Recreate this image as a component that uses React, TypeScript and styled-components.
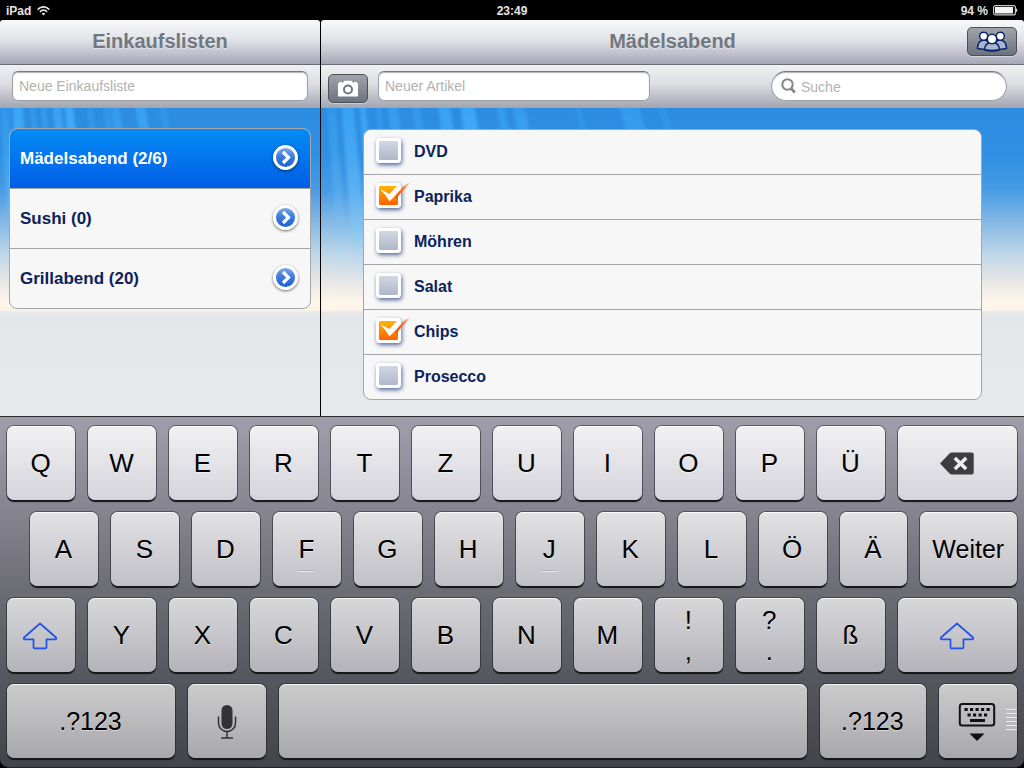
import React, { useState } from 'react';
import styled, { createGlobalStyle, css } from 'styled-components';

const GlobalStyle = createGlobalStyle`
  *, *::before, *::after { box-sizing: border-box; }
  body {
    margin: 0;
    background: #000;
    font-family: "Liberation Sans", Arial, Helvetica, sans-serif;
  }
  button, input { font: inherit; margin: 0; }
`;

const Screen = styled.div`
  display: flex;
  flex-direction: column;
  min-height: 100vh;
`;

/* ---------- status bar ---------- */

const StatusBar = styled.header`
  display: grid;
  grid-template-columns: 1fr auto 1fr;
  align-items: center;
  height: 20px;
  padding: 1px 6px 0;
  background: #000;
  color: #e4e4e4;
  font-size: 12px;
  font-weight: bold;
`;

const StatusGroup = styled.div<{ $end?: boolean }>`
  display: flex;
  align-items: center;
  gap: ${(p) => (p.$end ? 5 : 6)}px;
  justify-content: ${(p) => (p.$end ? 'flex-end' : 'flex-start')};
`;

/* ---------- split view ---------- */

const Split = styled.div`
  display: grid;
  grid-template-columns: 320px minmax(0, 1fr);
  gap: 1px;
  flex: 1;
  background: #000;
`;

const Pane = styled.section`
  display: flex;
  flex-direction: column;
`;

const TitleBar = styled.div`
  display: grid;
  grid-template-columns: 1fr auto 1fr;
  align-items: center;
  height: 45px;
  padding: 0 7px 2px;
  border-bottom: 1px solid #686a74;
  border-radius: 3px 3px 0 0;
  background: linear-gradient(#f8f9fa, #e2e3e8 45%, #a5a7b6);
`;

const Title = styled.h1`
  grid-column: 2;
  margin: 0;
  color: #717880;
  font-size: 20px;
  line-height: 24px;
  text-shadow: 0 1px 0 rgba(255, 255, 255, 0.4);
`;

const Toolbar = styled.div<{ $wide?: boolean }>`
  display: flex;
  align-items: flex-start;
  gap: 10px;
  height: 43px;
  padding: ${(p) => (p.$wide ? '6px 17px 0 7px' : '6px 12px 0')};
  background: linear-gradient(#f1f1f4, #dcdde3 45%, #a2a4b1);
`;

const field = css`
  height: 30px;
  border: 1px solid #a0a1a8;
  border-top-color: #77787d;
  background: #fff;
  box-shadow: inset 0 1px 1px rgba(0, 0, 0, 0.3);
  color: #222;
  font-size: 14px;
`;

const TextField = styled.input<{ $width: string }>`
  ${field}
  width: ${(p) => p.$width};
  min-width: 0;
  padding: 0 6px;
  border-radius: 6px;
  outline: none;
  &::placeholder { color: #b2b2b2; }
`;

const SearchBox = styled.label`
  ${field}
  display: flex;
  align-items: center;
  gap: 5px;
  flex: 0 1 236px;
  min-width: 0;
  margin-left: auto;
  padding: 0 9px;
  border-radius: 15px;
`;

const SearchInput = styled.input`
  flex: 1;
  min-width: 0;
  padding: 2px 0 0;
  border: 0;
  background: none;
  outline: none;
  &::placeholder { color: #b2b2b2; }
`;

const BarButton = styled.button<{ $width: number; $end?: boolean }>`
  display: flex;
  align-items: center;
  justify-content: center;
  flex: none;
  width: ${(p) => p.$width}px;
  height: 29px;
  padding: 0;
  border: 1px solid #4d5057;
  border-radius: 5px;
  background: linear-gradient(#a0a3aa, #868b94 50%, #6d737d);
  box-shadow: 0 1px 0 rgba(255, 255, 255, 0.4);
  ${(p) => (p.$end ? 'grid-column: 3; justify-self: end;' : 'margin-top: 3px;')}
`;

const Backdrop = styled.div`
  position: relative;
  flex: 1;
  overflow: hidden;
  background:
    linear-gradient(
      #2b8ce2 0, #2f8fe3 45px, #479be4 82px, #86b9e5 115px,
      #bdd5e8 145px, #ece9e6 177px, #fff6ea 196px, #fdf3e8 202px,
      #e3e7ea 205px, #e5e9ea 100%
    );
`;

const Rays = styled.svg`
  position: absolute;
  top: 0;
  left: 0;
  width: 420px;
  height: 200px;
`;

/* ---------- lists ---------- */

const ListCard = styled.ul<{ $margin: string }>`
  position: relative;
  margin: ${(p) => p.$margin};
  padding: 0;
  overflow: hidden;
  border: 1px solid #a6a6a8;
  border-radius: 8px;
  background: #f7f7f7;
  list-style: none;
`;

const ListItem = styled.li`
  & + & { border-top: 1px solid #a6a6a8; }
`;

const ShoppingList = styled.button<{ $active: boolean }>`
  display: flex;
  align-items: center;
  justify-content: space-between;
  width: 100%;
  height: 59px;
  padding: 0 12px 0 10px;
  border: 0;
  background: ${(p) => (p.$active ? 'linear-gradient(#058cf5, #015de6)' : 'none')};
  color: ${(p) => (p.$active ? '#fff' : '#0b225c')};
  font-size: 17px;
  font-weight: bold;
  text-align: left;
`;

const Disclosure = styled.span`
  display: flex;
  align-items: center;
  justify-content: center;
  width: 25px;
  height: 25px;
  margin-bottom: 2px;
  border: 3px solid #fff;
  border-radius: 50%;
  background: linear-gradient(#7ba5e6, #3a78db 50%, #1a62d6);
  box-shadow: 0 1px 3px rgba(0, 0, 0, 0.6);
`;

const Article = styled.label`
  display: flex;
  align-items: center;
  gap: 13px;
  height: 44px;
  padding: 0 12px;
  color: #0b225c;
  font-size: 16px;
  font-weight: bold;
`;

const Tick = styled.span`
  position: relative;
  width: 25px;
  height: 25px;
  margin-bottom: 3px;
`;

const TickBox = styled.input`
  display: block;
  width: 25px;
  height: 25px;
  border: 3px solid #fff;
  border-radius: 4px;
  appearance: none;
  background: linear-gradient(#d2d7e2, #afb7ca) padding-box;
  box-shadow: 1px 2px 4px rgba(30, 55, 120, 0.75);
  &:checked { background: linear-gradient(#ffb400, #ff6000) padding-box; }
`;

const TickMark = styled.svg`
  position: absolute;
  top: -3px;
  left: 0;
  pointer-events: none;
`;

/* ---------- keyboard ---------- */

const Keyboard = styled.section`
  background: #000;
  border-top: 1px solid #2c2d30;
`;

const KeyBed = styled.div`
  display: grid;
  gap: 12px;
  padding: 9px 7px;
  border-bottom: 1px solid #222327;
  border-radius: 0 0 9px 9px;
  background: linear-gradient(#a19eac, #86848f 27%, #6c6c75 50%, #56565e 75%, #43434b);
`;

const shades = [
  ['#f1f1f3', '#d5d4dc'],
  ['#e2e2e4', '#c1c0c7'],
  ['#d8d8da', '#b4b3b9'],
  ['#cccccd', '#a8a8ac'],
];

const KeyRow = styled.div<{ $shade: number; $indent?: boolean }>`
  --top: ${(p) => shades[p.$shade][0]};
  --bottom: ${(p) => shades[p.$shade][1]};
  display: flex;
  gap: 13px;
  padding-left: ${(p) => (p.$indent ? 23 : 0)}px;
`;

const Key = styled.button<{ $span?: number; $size?: number }>`
  position: relative;
  display: flex;
  flex-direction: column;
  align-items: center;
  justify-content: center;
  flex: ${(p) => p.$span ?? 68} 1 0;
  min-width: 0;
  height: 74px;
  padding: 1px 1px 0 0;
  border: 0;
  border-radius: 7px;
  background: linear-gradient(var(--top), var(--bottom));
  box-shadow:
    inset 0 1px 0 rgba(255, 255, 255, 0.75),
    0 0 0 1px rgba(30, 30, 36, 0.5),
    0 2px 1px #101014;
  color: #000;
  font-size: ${(p) => p.$size ?? 26}px;
  line-height: 31px;
  text-shadow: 0 1px 0 rgba(255, 255, 255, 0.5);
`;

const HomeBar = styled.span`
  position: absolute;
  bottom: 14px;
  width: 16px;
  height: 2px;
  border-top: 1px solid #b3b3b8;
  background: #e9e9eb;
`;

const Grip = styled.span`
  position: absolute;
  top: 25px;
  right: 0;
  width: 11px;
  height: 24px;
  background: repeating-linear-gradient(#ececee 0 1px, #b8b8bb 1px 2px, transparent 2px 4px);
`;

/* ---------- drawings ---------- */

const WifiIcon = () => (
  <svg width="13" height="10" viewBox="0 0 13 10" aria-hidden="true">
    <g fill="none" stroke="#e4e4e4" strokeWidth="1.7">
      <path d="M.7 3.6C4-.1 9-.1 12.3 3.6" />
      <path d="M2.9 5.8c2.1-2.2 5.1-2.2 7.2 0" />
    </g>
    <path d="M4.7 7.5c1.1-1 2.5-1 3.600 0L6.500 9.500z" fill="#e4e4e4" />
  </svg>
);

const BatteryIcon = () => (
  <svg width="25" height="11" viewBox="0 0 25 11" aria-hidden="true">
    <rect x=".6" y=".6" width="21.800" height="9.300" rx="2" fill="none" stroke="#c9c9c9" strokeWidth="1.200" />
    <rect x="2" y="2" width="18" height="6.500" fill="#f4f4f4" />
    <path d="M23 3.300c1.800.3 1.800 3.600 0 3.900z" fill="#c9c9c9" />
  </svg>
);

const CameraIcon = () => (
  <svg width="20" height="17" viewBox="0 0 20 17" aria-hidden="true">
    <path fill="#fff" d="M0 3h1V2h3v1h.5L6.500.8h7L15.500 3h.5V2h3v1h1v13.500H0z" />
    <circle cx="10" cy="9.500" r="4" fill="#fff" stroke="#6f757f" strokeWidth="2" />
  </svg>
);

const PeopleIcon = () => (
  <svg width="32" height="21" viewBox="0 0 32 21" aria-hidden="true">
    <g fill="#a9b5d0" stroke="#0a2468" strokeWidth="1.500">
      <path d="M1.500 17.500C1.500 12.500 3 9.500 7.500 9s6 3 6 8.500q-6 1.500-12 0z" />
      <path d="M18.500 17.500c0-5.500 1.500-9 6-8.500s6 3.500 6 8.500q-6 1.500-12 0z" />
    </g>
    <g fill="#fff" stroke="#0a2468" strokeWidth="1.500">
      <circle cx="7.700" cy="5.200" r="4" />
      <circle cx="24.300" cy="5.200" r="4" />
    </g>
    <path
      d="M8.500 19C8.500 14 11 11.500 16 11.500s7.500 2.500 7.500 7.500q-7.500 2-15 0z"
      fill="#a9b5d0"
      stroke="#0a2468"
      strokeWidth="1.500"
    />
    <path d="M10 18.800q6 1.600 12 0" fill="none" stroke="#0a2468" strokeWidth="1.500" />
    <circle cx="16" cy="8" r="4.700" fill="#fff" stroke="#0a2468" strokeWidth="1.500" />
  </svg>
);

const SearchIcon = () => (
  <svg width="15" height="16" viewBox="0 0 15 16" fill="none" stroke="#85898e" aria-hidden="true">
    <circle cx="6.500" cy="6.500" r="5.200" strokeWidth="2.100" />
    <path d="M10.200 10.500l3.600 4" strokeWidth="2.800" />
  </svg>
);

const ChevronIcon = () => (
  <svg width="11" height="15" viewBox="0 0 11 15" aria-hidden="true">
    <path d="M3 2l5.500 5.500L3 13" fill="none" stroke="#fff" strokeWidth="3.200" />
  </svg>
);

const CheckDrawing = () => (
  <TickMark width="36" height="28" viewBox="0 0 36 28" aria-hidden="true">
    <defs>
      <linearGradient id="tail" x1="21" y1="16" x2="34" y2="2" gradientUnits="userSpaceOnUse">
        <stop offset="0" stopColor="#ff5206" />
        <stop offset="0.6" stopColor="#ff7638" />
        <stop offset="1" stopColor="#ffb48c" stopOpacity="0.6" />
      </linearGradient>
    </defs>
    <path d="M4.500 9.500Q9 11 13.300 14L21 6h4v6l-4 2-7.500 7.300Q10 15 4.500 9.500z" fill="#fff" />
    <path d="M18.800 17Q25.500 6.500 34.500 2 28.500 9 21.800 16.500L21.800 20z" fill="url(#tail)" />
  </TickMark>
);

const ShiftIcon = () => (
  <svg width="36" height="28" viewBox="0 0 36 28" aria-hidden="true">
    <path
      d="M18 1.500L34 15.500q1 1.800-1 1.800h-8.500v8q0 1-1 1h-11q-1 0-1-1v-8H3q-2 0-1-1.800z"
      fill="none"
      stroke="#2152ea"
      strokeWidth="1.700"
      strokeLinejoin="round"
    />
  </svg>
);

const BackspaceIcon = () => (
  <svg width="34" height="23" viewBox="0 0 34 23" aria-hidden="true">
    <path d="M0 11.500L9.500 1.500Q10.500.5 12 .5h20q1.700 0 1.700 1.700v18.600q0 1.700-1.700 1.700H12q-1.500 0-2.500-1z" fill="#3d3d40" />
    <path d="M14.800 6l11.400 11M26.200 6L14.800 17" stroke="#eee" strokeWidth="3.600" />
  </svg>
);

const MicIcon = () => (
  <svg width="20" height="34" viewBox="0 0 20 34" aria-hidden="true">
    <rect x="4.500" y="0" width="11" height="24" rx="5.500" fill="#333336" />
    <path
      d="M1.500 11.500V18a8.500 8.500 0 0 0 17 0v-6.500M10 26.500v6M4 33h12"
      fill="none"
      stroke="#333336"
      strokeWidth="1.500"
    />
  </svg>
);

const HideKeyboardIcon = () => (
  <svg width="38" height="40" viewBox="0 0 38 40" aria-hidden="true">
    <rect x="1.800" y="2" width="34.400" height="21.500" rx="2.500" fill="none" stroke="#111" strokeWidth="2" />
    <g stroke="#111" strokeWidth="3">
      <path d="M6.500 7.500h26" strokeDasharray="3.200 2.300" />
      <path d="M9.500 13h21" strokeDasharray="3.200 2.300" />
      <path d="M12 18.500h15" />
    </g>
    <path d="M11.500 31.500h15L19 39z" fill="#111" />
  </svg>
);

/* x position, width and strength of each light ray at the top edge */
const RAYS_LEFT = [
  [2, 8, 0.35], [14, 10, 0.7], [32, 4, 0.4], [42, 5, 0.4], [54, 8, 0.6], [66, 8, 0.8],
  [88, 5, 0.3], [104, 6, 0.3], [112, 8, 0.45], [136, 10, 0.55], [160, 6, 0.25],
];
const RAYS_RIGHT = [
  [8, 8, 0.35], [22, 12, 0.6], [40, 6, 0.6], [56, 5, 0.3], [68, 10, 0.45], [92, 8, 0.35],
  [118, 12, 0.6], [140, 14, 0.7], [176, 8, 0.4], [192, 12, 0.45], [254, 5, 0.25], [298, 20, 0.4], [336, 8, 0.2],
];

const LightRays = ({ id, rays }: { id: string; rays: number[][] }) => (
  <Rays viewBox="0 0 420 200" aria-hidden="true">
    <defs>
      <linearGradient id={id} x1="0" y1="0" x2="0" y2="200" gradientUnits="userSpaceOnUse">
        <stop offset="0" stopColor="#3fb0ff" />
        <stop offset="0.6" stopColor="#7cc8fa" stopOpacity="0.9" />
        <stop offset="0.95" stopColor="#d8effc" stopOpacity="0" />
      </linearGradient>
      <filter id={`${id}-soft`} x="-20%" width="140%">
        <feGaussianBlur stdDeviation="1.5" />
      </filter>
    </defs>
    <g fill={`url(#${id})`} filter={`url(#${id}-soft)`}>
      {rays.map(([x, w, opacity]) => (
        <path
          key={x}
          opacity={opacity}
          d={`M${x - 2} -8h${w}q${8 + x / 12} 110 ${16 + x / 6} 208h-${w + 2}q-${8 + x / 12} -98 -${14 + x / 6} -208z`}
        />
      ))}
    </g>
  </Rays>
);

/* ---------- screen ---------- */

const LISTS = ['Mädelsabend (2/6)', 'Sushi (0)', 'Grillabend (20)'];

const ARTICLES = [
  { name: 'DVD', done: false },
  { name: 'Paprika', done: true },
  { name: 'Möhren', done: false },
  { name: 'Salat', done: false },
  { name: 'Chips', done: true },
  { name: 'Prosecco', done: false },
];

export default function App() {
  const [active, setActive] = useState(0);
  const [articles, setArticles] = useState(ARTICLES);

  const toggle = (index: number) =>
    setArticles((items) => items.map((a, i) => (i === index ? { ...a, done: !a.done } : a)));

  return (
    <Screen>
      <GlobalStyle />
      <StatusBar>
        <StatusGroup>
          <span>iPad</span>
          <WifiIcon />
        </StatusGroup>
        <span>23:49</span>
        <StatusGroup $end>
          <span>94 %</span>
          <BatteryIcon />
        </StatusGroup>
      </StatusBar>

      <Split>
        <Pane>
          <TitleBar>
            <Title>Einkaufslisten</Title>
          </TitleBar>
          <Toolbar>
            <TextField $width="100%" placeholder="Neue Einkaufsliste" aria-label="Neue Einkaufsliste" />
          </Toolbar>
          <Backdrop>
            <LightRays id="rays-left" rays={RAYS_LEFT} />
            <ListCard $margin="20px 9px">
              {LISTS.map((name, i) => (
                <ListItem key={name}>
                  <ShoppingList type="button" $active={i === active} onClick={() => setActive(i)}>
                    {name}
                    <Disclosure>
                      <ChevronIcon />
                    </Disclosure>
                  </ShoppingList>
                </ListItem>
              ))}
            </ListCard>
          </Backdrop>
        </Pane>

        <Pane>
          <TitleBar>
            <Title as="h2">Mädelsabend</Title>
            <BarButton type="button" $width={50} $end aria-label="Personen">
              <PeopleIcon />
            </BarButton>
          </TitleBar>
          <Toolbar $wide>
            <BarButton type="button" $width={40} aria-label="Kamera">
              <CameraIcon />
            </BarButton>
            <TextField $width="272px" placeholder="Neuer Artikel" aria-label="Neuer Artikel" />
            <SearchBox>
              <SearchIcon />
              <SearchInput placeholder="Suche" aria-label="Suche" />
            </SearchBox>
          </Toolbar>
          <Backdrop>
            <LightRays id="rays-right" rays={RAYS_RIGHT} />
            <ListCard $margin="21px 42px 16px">
              {articles.map((article, i) => (
                <ListItem key={article.name}>
                  <Article>
                    <Tick>
                      <TickBox type="checkbox" checked={article.done} onChange={() => toggle(i)} />
                      {article.done && <CheckDrawing />}
                    </Tick>
                    {article.name}
                  </Article>
                </ListItem>
              ))}
            </ListCard>
          </Backdrop>
        </Pane>
      </Split>

      <Keyboard aria-label="Tastatur">
        <KeyBed>
          <KeyRow $shade={0}>
            {[...'QWERTZUIOPÜ'].map((c) => (
              <Key type="button" key={c}>{c}</Key>
            ))}
            <Key type="button" $span={120} aria-label="Löschen">
              <BackspaceIcon />
            </Key>
          </KeyRow>
          <KeyRow $shade={1} $indent>
            {[...'ASDFGHJKLÖÄ'].map((c) => (
              <Key type="button" key={c}>
                {c}
                {(c === 'F' || c === 'J') && <HomeBar />}
              </Key>
            ))}
            <Key type="button" $span={97} $size={25}>Weiter</Key>
          </KeyRow>
          <KeyRow $shade={2}>
            <Key type="button" aria-label="Umschalttaste links">
              <ShiftIcon />
            </Key>
            {[...'YXCVBNM'].map((c) => (
              <Key type="button" key={c}>{c}</Key>
            ))}
            <Key type="button">
              <span>!</span>
              <span>,</span>
            </Key>
            <Key type="button">
              <span>?</span>
              <span>.</span>
            </Key>
            <Key type="button">ß</Key>
            <Key type="button" $span={120} aria-label="Umschalttaste rechts">
              <ShiftIcon />
            </Key>
          </KeyRow>
          <KeyRow $shade={3}>
            <Key type="button" $span={168} $size={25}>.?123</Key>
            <Key type="button" $span={78} aria-label="Diktieren">
              <MicIcon />
            </Key>
            <Key type="button" $span={530} aria-label="Leertaste" />
            <Key type="button" $span={105} $size={25}>.?123</Key>
            <Key type="button" $span={78} aria-label="Tastatur ausblenden">
              <HideKeyboardIcon />
              <Grip />
            </Key>
          </KeyRow>
        </KeyBed>
      </Keyboard>
    </Screen>
  );
}
